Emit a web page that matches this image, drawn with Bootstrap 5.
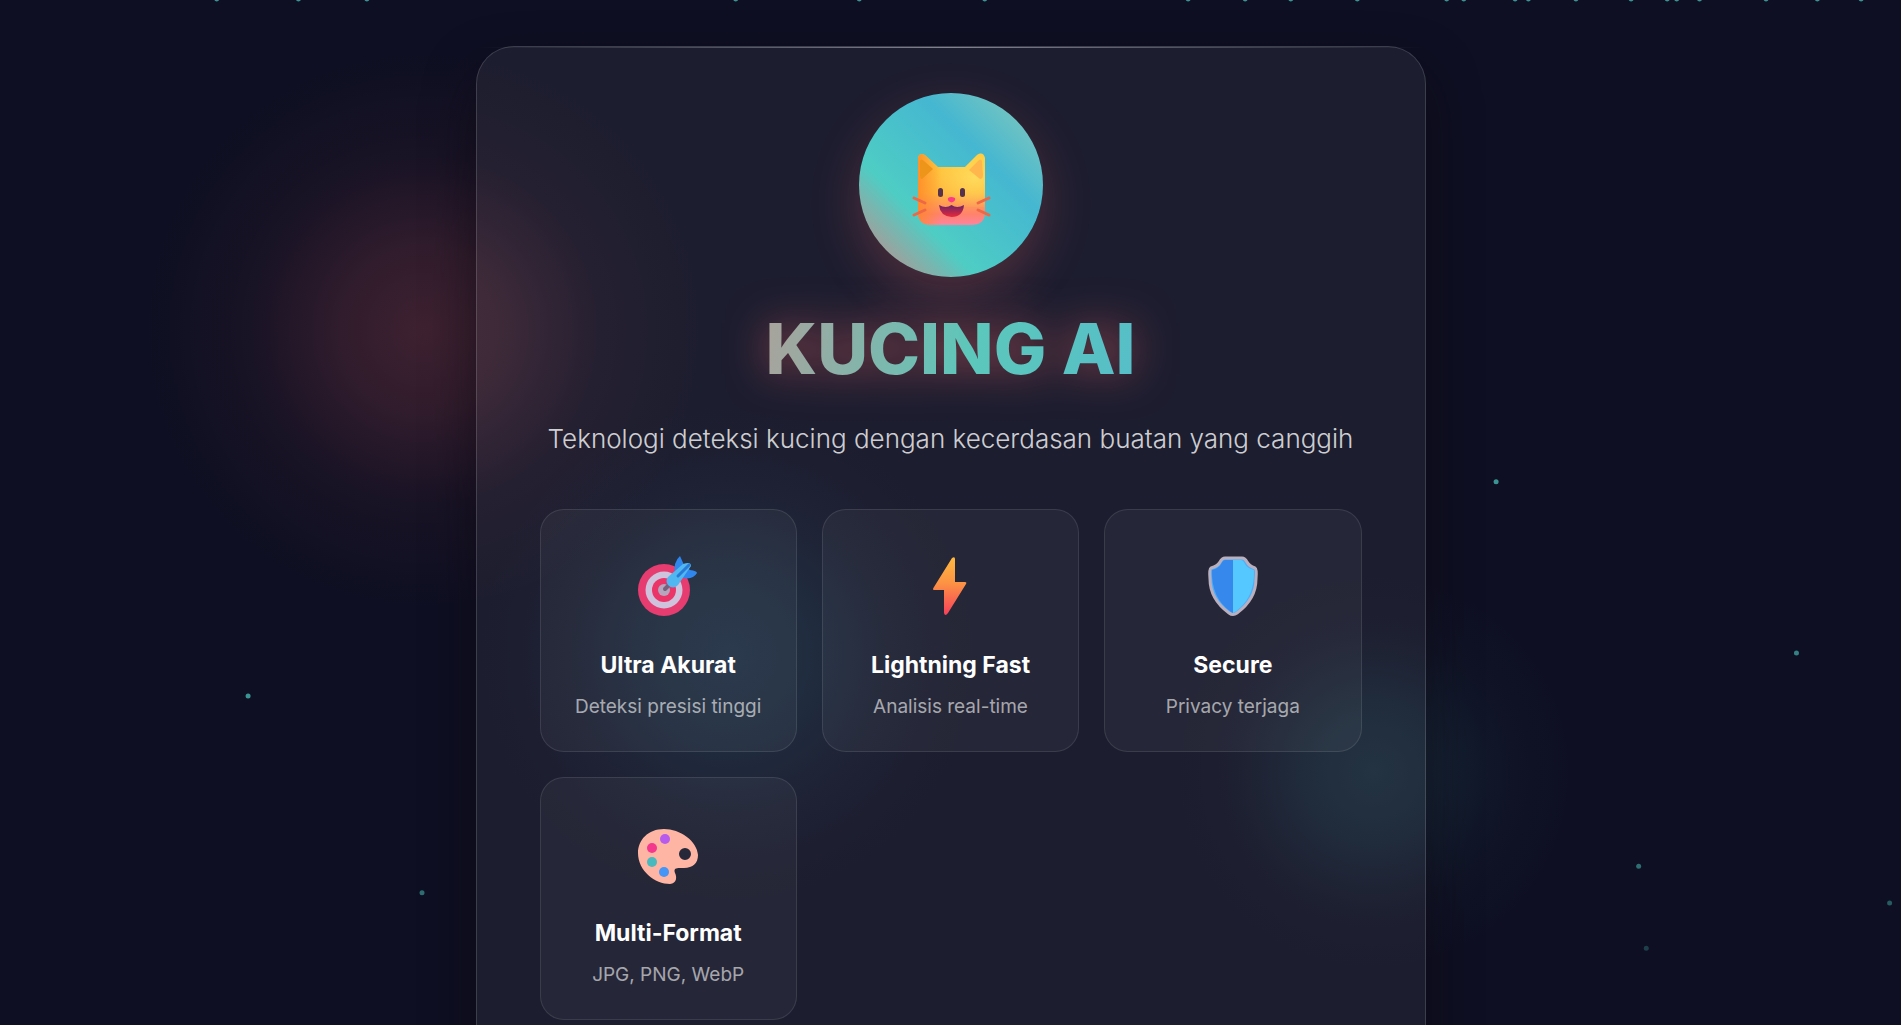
<!DOCTYPE html>
<html lang="id">
<head>
<meta charset="utf-8">
<meta name="viewport" content="width=device-width, initial-scale=1">
<title>Kucing AI</title>
<link href="https://cdn.jsdelivr.net/npm/bootstrap@5.3.0/dist/css/bootstrap.min.css" rel="stylesheet">
<style>
body{background:#0e0f22;color:#fff;font-family:Inter,"Open Sans",sans-serif}
.scene{position:relative;height:100vh;padding:46px 24px;overflow:hidden}
.sky{position:absolute;inset:0;width:100%;height:100%;pointer-events:none}
.orb{position:absolute;border-radius:50%;pointer-events:none;transform:translate(-50%,-50%)}
.orb-red{left:22.3%;top:330px;width:560px;height:560px;background:radial-gradient(closest-side,rgba(255,107,107,.2),rgba(255,107,107,.14) 30%,rgba(255,107,107,.045) 62%,transparent)}
.orb-blue{left:38.3%;top:655px;width:500px;height:500px;background:radial-gradient(closest-side,rgba(69,183,209,.14),rgba(69,183,209,.1) 30%,rgba(69,183,209,.035) 65%,transparent)}
.orb-teal{left:72.3%;top:772px;width:400px;height:400px;background:radial-gradient(closest-side,rgba(78,205,196,.13),rgba(78,205,196,.09) 30%,rgba(78,205,196,.025) 68%,transparent)}
.panel{position:relative;max-width:950px;min-height:1100px;margin:0 auto;padding:46px 63px;border:1px solid rgba(255,255,255,.15);border-radius:38px;background:rgba(255,255,255,.06);box-shadow:0 24px 50px rgba(14,8,14,.5)}
.panel::before{content:"";position:absolute;left:0;right:0;top:0;height:1px;background:linear-gradient(90deg,transparent,rgba(255,255,255,.45),transparent)}
.logo{width:184px;height:184px;padding-top:8px;border-radius:50%;background:linear-gradient(45deg,#ff6b6b -8%,#4ecdc4 32%,#45b7d1 67%,#96ceb4 105%);box-shadow:0 18px 50px rgba(255,107,107,.24)}
.title{font-size:70px;line-height:100px;font-weight:800;margin:22px 0 20px;filter:drop-shadow(0 0 20px rgba(255,107,107,.5))}
.title span{background:linear-gradient(100deg,#aaa29b,#5cc7bb 56%,#56bec8);-webkit-background-clip:text;background-clip:text;color:transparent}
.tagline{font-size:26px;line-height:40px;font-weight:300;color:rgba(255,255,255,.8);margin-bottom:50px}
.features{display:grid;grid-template-columns:repeat(auto-fit,minmax(240px,1fr));gap:25px}
.feature{border:1px solid rgba(255,255,255,.1);border-radius:24px;background:rgba(255,255,255,.045);padding:38px 20px 28px}
.feature svg{width:72px;height:72px;display:block;margin:0 auto 27px}
.feature h2{font-size:23px;line-height:36px;font-weight:700;margin:0 0 8px}
.feature p{font-size:19px;line-height:32px;color:rgba(255,255,255,.6);margin:0;white-space:nowrap}
</style>
</head>
<body>
<main class="scene">
<svg class="sky" aria-hidden="true" id="sky"></svg>
<div class="orb orb-red"></div><div class="orb orb-blue"></div><div class="orb orb-teal"></div>
<section class="panel text-center">
<div class="logo d-flex align-items-center justify-content-center mx-auto">
<svg width="80" height="74" viewBox="0 0 80 74" role="img" aria-label="Kucing">
<defs><linearGradient id="fur" x2="0" y2="1"><stop offset=".1" stop-color="#ffc83c"/><stop offset=".55" stop-color="#ffb83e"/><stop offset=".85" stop-color="#ff826c"/><stop offset="1" stop-color="#ff83a0"/></linearGradient>
<radialGradient id="cheek" cx=".85" cy=".45" r=".6"><stop stop-color="#ffe163" stop-opacity=".8"/><stop offset="1" stop-color="#ffe163" stop-opacity="0"/></radialGradient>
<linearGradient id="side"><stop stop-color="#ff8626" stop-opacity=".8"/><stop offset=".35" stop-color="#ff8626" stop-opacity="0"/></linearGradient>
<linearGradient id="mouth" x2="0" y2="1"><stop stop-color="#672465"/><stop offset="1" stop-color="#e9283c"/></linearGradient></defs>
<path d="M7 6Q8 0 14 3L27 15H54L66 3Q72-1 74 6V62Q73 73 60 73H20Q8 73 7 62Z" fill="url(#fur)"/><path d="M7 6Q8 0 14 3L27 15H54L66 3Q72-1 74 6V62Q73 73 60 73H20Q8 73 7 62Z" fill="url(#side)"/><path d="M7 6Q8 0 14 3L27 15H54L66 3Q72-1 74 6V55H7Z" fill="url(#cheek)"/>
<path d="M9 9Q10 6 13 9L22 17 11 27Q9 27 9 23Z" fill="#ed941b"/><path d="M71 9Q70 6 67 9L58 18 69 27Q72 27 72 23Z" fill="#ffb74d"/>
<rect x="27" y="36" width="5" height="9" rx="2.5" fill="#56324d"/><rect x="49" y="36" width="5" height="9" rx="2.5" fill="#56324d"/>
<path d="M37 46Q40 44 44 46 45 49 40.500 50.500 36 49 37 46Z" fill="#ff3985"/>
<path d="M28 53Q35 57 40.500 53 46 57 53 53 52 65 40.500 65 29 64 28 53Z" fill="url(#mouth)"/>
<path d="M3 46L14 51M3 63L14 58M78 46L67 51M78 63L67 58" stroke="#ed6847" stroke-width="3" stroke-linecap="round"/>
</svg></div>
<h1 class="title"><span>KUCING AI</span></h1>
<p class="tagline">Teknologi deteksi kucing dengan kecerdasan buatan yang canggih</p>
<div class="features">
<article class="feature">
<svg viewBox="0 0 72 72" aria-hidden="true"><circle cx="32" cy="42" r="26" fill="#e63c70"/><circle cx="32" cy="42" r="18.500" fill="#cec2dd"/><circle cx="32" cy="42" r="12" fill="#eb3568"/><circle cx="32" cy="42" r="6" fill="#b5a6bd"/><path d="M33 41L39 35" stroke="#77627e" stroke-width="4" stroke-linecap="round"/><path d="M43 26Q41 14 48 8L52 17 58 22Q65 23 65 25 61 32 51 30Z" fill="#2f86ed"/><path d="M36 29L51 16Q59 13 59 18L46 37Q41 42 36 37 33 33 36 29Z" fill="#50b7f0"/><path d="M46 28L57 17" stroke="#297bd8" stroke-width="3" stroke-linecap="round"/></svg>
<h2>Ultra Akurat</h2><p>Deteksi presisi tinggi</p></article>
<article class="feature">
<svg viewBox="0 0 72 72" aria-hidden="true"><defs><linearGradient id="bolt" x2="0" y2="1"><stop stop-color="#ffb93f"/><stop offset=".45" stop-color="#fc9344"/><stop offset="1" stop-color="#f6405a"/></linearGradient></defs><path d="M38 10Q41 8 41 11V34H51Q53 34 52 36L34 65Q31 69 30 65V42H20Q18 42 20 39Z" fill="url(#bolt)"/></svg>
<h2>Lightning Fast</h2><p>Analisis real-time</p></article>
<article class="feature">
<svg viewBox="0 0 72 72" aria-hidden="true"><path d="M28 10H45Q48 10 50 14T58 20Q60 21 59 31 59 51 40 65 36 68 32 65 13 51 13 31 12 21 14 20 21 18 23 14 25 10 28 10Z" fill="#4aaefc" stroke="#b9afbe" stroke-width="3"/><path d="M36 12H28Q26 12 24 16T15 22Q14 50 34 64L36 65Z" fill="#3788ed"/><path d="M36 12H44Q46 12 48 16T57 22Q58 50 38 64L36 65Z" fill="#55c8ff"/></svg>
<h2>Secure</h2><p>Privacy terjaga</p></article>
<article class="feature">
<svg viewBox="0 0 72 72" aria-hidden="true"><path fill-rule="evenodd" d="M32 13C16 13 6 24 6 37 6 55 23 68 38 68 45 67 45 61 43 57 41 51 46 52 52 52 61 52 66 47 66 39 65 25 48 13 32 13ZM59 38A6 6 0 1 1 47 38 6 6 0 1 1 59 38Z" fill="#ffb5a4"/><circle cx="33" cy="23" r="5" fill="#b75bee"/><circle cx="20" cy="32" r="5" fill="#f4388d"/><circle cx="20" cy="46" r="5" fill="#48b9bd"/><circle cx="32" cy="56" r="5" fill="#4495f5"/></svg>
<h2>Multi-Format</h2><p>JPG, PNG, WebP</p></article>
</div>
</section>
</main>
<script>
const sky=document.getElementById('sky');
const stars=[[78.7,47,.7],[94.5,63.7,.6],[13.05,67.9,.7],[22.2,87.1,.5],[86.2,84.5,.5],[99.4,88.1,.4],[86.6,92.5,.25]];
[11.4,15.7,19.3,38.7,45.2,51.8,62.5,65.5,67.9,71.4,76.1,77,79.7,80.4,82.9,85.8,87.7,88.2,89.4,92.9,95.6,97.9].forEach(x=>stars.push([x,-.1,.7]));
sky.innerHTML=stars.map(([x,y,o])=>`<circle cx="${x}%" cy="${y}%" r="2.5" fill="#4ecdc4" opacity="${o}"/>`).join('');
</script>
<script src="https://cdn.jsdelivr.net/npm/bootstrap@5.3.0/dist/js/bootstrap.bundle.min.js"></script>
</body>
</html>
